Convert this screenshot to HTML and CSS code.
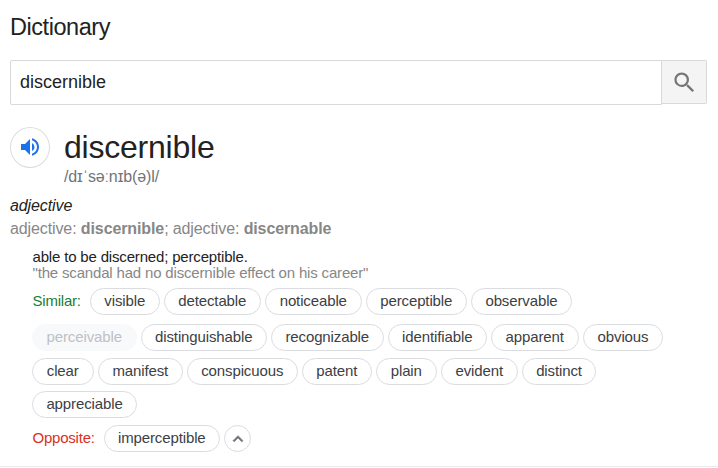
FILE: index.html
```html
<!DOCTYPE html>
<html lang="en">
<head>
<meta charset="utf-8">
<title>Dictionary</title>
<link rel="stylesheet" href="styles.css">
</head>
<body>
<main class="dictionary">
  <h1 class="title">Dictionary</h1>
  <div class="search">
    <div class="field">discernible</div>
    <button class="go" aria-label="Search"><svg width="27" height="27" viewBox="0 0 24 24"><path fill="#757575" d="M15.5 14h-.79l-.28-.27A6.471 6.471 0 0 0 16 9.5 6.5 6.5 0 1 0 9.5 16c1.61 0 3.09-.59 4.23-1.57l.27.28v.79l5 4.99L20.49 19l-4.99-5zm-6 0C7.01 14 5 11.99 5 9.5S7.01 5 9.5 5 14 7.01 14 9.5 11.99 14 9.5 14z"/></svg></button>
  </div>
  <header class="entry">
    <button class="speak" aria-label="Listen"><svg width="24" height="24" viewBox="0 0 24 24"><path fill="#1a73e8" d="M3 9v6h4l5 5V4L7 9H3zm13.5 3A4.5 4.5 0 0 0 14 7.97v8.05c1.48-.73 2.5-2.25 2.5-4.02zM14 3.23v2.06c2.89.86 5 3.54 5 6.71s-2.11 5.85-5 6.71v2.06c4.01-.91 7-4.49 7-8.77s-2.99-7.86-7-8.77z"/></svg></button>
    <div>
      <div class="word">discernible</div>
      <div class="phonetic">/dɪˈsəːnɪb(ə)l/</div>
    </div>
  </header>
  <div class="pos">adjective</div>
  <div class="forms">adjective: <b>discernible</b>; adjective: <b>discernable</b></div>
  <section class="sense">
    <div class="definition">able to be discerned; perceptible.</div>
    <div class="example">"the scandal had no discernible effect on his career"</div>
    <div class="row first"><span class="label similar">Similar:</span><span class="chip">visible</span><span class="chip">detectable</span><span class="chip">noticeable</span><span class="chip">perceptible</span><span class="chip">observable</span></div>
    <div class="row second"><span class="chip muted">perceivable</span><span class="chip">distinguishable</span><span class="chip">recognizable</span><span class="chip">identifiable</span><span class="chip">apparent</span><span class="chip">obvious</span></div>
    <div class="row third"><span class="chip">clear</span><span class="chip">manifest</span><span class="chip">conspicuous</span><span class="chip">patent</span><span class="chip">plain</span><span class="chip">evident</span><span class="chip">distinct</span></div>
    <div class="row fourth"><span class="chip">appreciable</span></div>
    <div class="row fifth"><span class="label opposite">Opposite:</span><span class="chip">imperceptible</span><button class="toggle" aria-label="Show less"><svg width="20" height="20" viewBox="0 0 24 24"><path fill="#70757a" stroke="#70757a" stroke-width=".8" d="M12 8l-6 6 1.41 1.41L12 10.83l4.59 4.58L18 14z"/></svg></button></div>
  </section>
</main>
</body>
</html>
```
FILE: styles.css
```css
* { box-sizing: border-box; }
body { margin: 0; background: #fff; color: #222; font-family: "Liberation Sans", Arial, sans-serif; }
button { padding: 0; }
.dictionary { height: 467px; padding: 13px 11px 0 10px; border-bottom: 1px solid #ebebeb; white-space: nowrap; }
.title { margin: 0; font-size: 23.5px; font-weight: 400; line-height: 28px; letter-spacing: -.45px; }
.search { display: flex; align-items: flex-start; margin-top: 19px; }
.field { flex: 1; height: 45px; padding-left: 9px; border: 1px solid #d9d9d9; border-radius: 2px 0 0 2px; font-size: 18px; line-height: 42px; }
.go { display: flex; align-items: center; justify-content: center; width: 45px; height: 44px; border: 1px solid #d9d9d9; border-left: 0; border-radius: 0 2px 2px 0; background: #f4f4f4; }
.entry { display: flex; margin-top: 22px; }
.speak { display: flex; align-items: center; justify-content: center; width: 40px; height: 41px; margin-right: 14px; padding-bottom: 1px; border: 1px solid #dadce0; border-radius: 50%; background: #fff; }
.word { font-size: 32px; line-height: 40px; letter-spacing: -.22px; }
.phonetic { color: #70757a; font-size: 16px; line-height: 20px; letter-spacing: -.12px; }
.pos { margin-top: 9px; font-size: 16px; font-style: italic; line-height: 20px; letter-spacing: -.1px; }
.forms { margin-top: 2px; color: #878787; font-size: 16px; line-height: 22px; letter-spacing: -.11px; }
.sense { margin: 9px 0 0 22px; font-size: 15px; letter-spacing: -.17px; }
.definition, .example { padding-left: .5px; line-height: 16px; }
.example { color: #878787; }
.row { display: flex; align-items: center; gap: 4.5px; height: 27px; }
.first { margin-top: 7px; }
.second { margin-top: 9px; }
.third { margin-top: 7px; }
.fourth { margin-top: 6px; }
.fifth { margin-top: 7px; }
.label { width: 53.5px; padding-left: .5px; line-height: 25px; height: 27px; letter-spacing: -.22px; }
.similar { color: #188038; }
.opposite { width: 67.5px; color: #d93025; }
.chip { height: 27px; border: 1px solid #dadce0; border-radius: 14px; color: #3c4043; line-height: 24px; text-align: center; letter-spacing: -.12px; }
.muted { border-color: #f8f9fa; background: #f8f9fa; color: #bdc1c6; }
.toggle { display: flex; align-items: center; justify-content: center; width: 27px; height: 27px; border: 1px solid #dadce0; border-radius: 50%; background: #fff; }

/* Chip widths, row by row */
.first .chip:nth-child(2) { width: 69.5px; }
.first .chip:nth-child(3), .first .chip:nth-child(4) { width: 96.5px; }
.first .chip:nth-child(5) { width: 100.5px; }
.first .chip:nth-child(6) { width: 101px; }
.second .chip:nth-child(1) { width: 104.5px; }
.second .chip:nth-child(2) { width: 125.5px; }
.second .chip:nth-child(3) { width: 112.5px; }
.second .chip:nth-child(4) { width: 98.5px; }
.second .chip:nth-child(5) { width: 87.5px; }
.second .chip:nth-child(6) { width: 80px; }
.third .chip:nth-child(1) { width: 61.5px; }
.third .chip:nth-child(2) { width: 84.5px; }
.third .chip:nth-child(3) { width: 110.5px; }
.third .chip:nth-child(4) { width: 69.5px; }
.third .chip:nth-child(5) { width: 60.5px; }
.third .chip:nth-child(6) { width: 76.5px; }
.third .chip:nth-child(7) { width: 74px; }
.fourth .chip { width: 105px; }
.fifth .chip { width: 115.5px; }
```
